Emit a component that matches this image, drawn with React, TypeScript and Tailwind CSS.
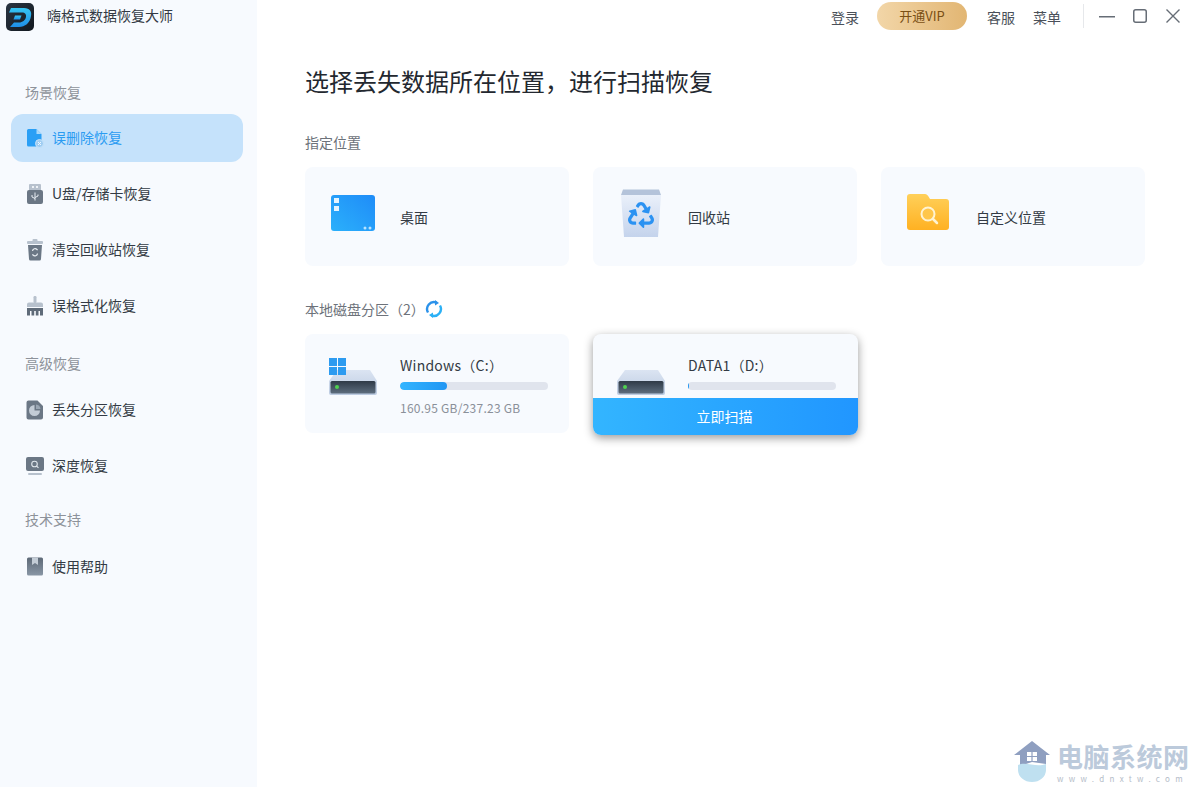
import React from 'react';
import { FaRecycle } from 'react-icons/fa';

const Logo = () => (
    <svg width="28" height="28" viewBox="0 0 28 28">
        <defs>
            <linearGradient id="logoBg" x1="0" y1="0" x2="1" y2="1">
                <stop offset="0" stopColor="#2a3542" />
                <stop offset="1" stopColor="#12181f" />
            </linearGradient>
            <linearGradient id="logoD" x1="0" y1="0" x2="0" y2="1">
                <stop offset="0" stopColor="#35c4f2" />
                <stop offset="1" stopColor="#1f8fe8" />
            </linearGradient>
        </defs>
        <rect width="28" height="28" rx="5" fill="url(#logoBg)" />
        <path
            d="M5 5H18C24 5 26 9 25 13C24 20 19 24 13 24H4L8 19.500H13C16.500 19.500 19.500 17 20 14C20.500 11.500 19 9.500 16 9.500H3z"
            fill="url(#logoD)"
        />
        <path d="M9 12.500H15.500L14 16.500H7.500z" fill="url(#logoD)" />
    </svg>
);

const FileIcon = () => (
    <svg width="18" height="20" viewBox="0 0 18 20">
        <path
            d="M2.500 1h8l5 5v11a1.500 1.500 0 0 1-1.500 1.500H2.500A1.500 1.500 0 0 1 1 17V2.500A1.500 1.500 0 0 1 2.500 1z"
            fill="#2a9ff5"
        />
        <path d="M10.500 1l5 5h-5z" fill="#a8d8fb" />
        <circle cx="13.500" cy="15.500" r="4" fill="#9fcdf2" stroke="#c5e2fa" />
        <path d="M12 14l3 3m0-3l-3 3" stroke="#eef7ff" strokeWidth="1" />
    </svg>
);

const UsbIcon = () => (
    <svg width="18" height="22" viewBox="0 0 18 22">
        <path d="M4 1h10a1 1 0 0 1 1 1v5H3V2a1 1 0 0 1 1-1z" fill="#b7c1cd" />
        <rect x="6" y="3" width="2" height="2" fill="#eef2f6" />
        <rect x="10" y="3" width="2" height="2" fill="#eef2f6" />
        <rect x="1" y="7" width="16" height="14" rx="2" fill="#6b7785" />
        <path
            d="M9 9.500v8M6 12v2l3 1.500M12 11.500v1.500l-3 1.500"
            stroke="#e8edf2"
            strokeWidth="1"
            fill="none"
        />
    </svg>
);

const TrashIcon = () => (
    <svg width="18" height="22" viewBox="0 0 18 22">
        <rect x="6.500" y="0" width="5" height="3" rx="1" fill="#b7c1cd" />
        <rect x="1" y="2" width="16" height="3" rx="1" fill="#b7c1cd" />
        <path d="M2 6h14l-1 14a1.500 1.500 0 0 1-1.500 1.500h-9A1.500 1.500 0 0 1 3 20z" fill="#6b7785" />
        <path
            d="M6.500 12a2.600 2.600 0 0 1 4.500-1.500l.6.600M11.500 14.500a2.600 2.600 0 0 1-4.500 1.500l-.6-.6"
            stroke="#e8edf2"
            strokeWidth="1.200"
            fill="none"
        />
    </svg>
);

const BrushIcon = () => (
    <svg width="18" height="20" viewBox="0 0 18 20">
        <rect x="7.500" y="0" width="3" height="7" rx="1.200" fill="#b7c1cd" />
        <path d="M3 6.500h12a2 2 0 0 1 2 2V11H1V8.500a2 2 0 0 1 2-2z" fill="#b7c1cd" />
        <path
            d="M1 12h16v7.500h-3V15h-1.500v4.500h-2.700V15H8.200v4.500H5.500V15H4v4.500H1z"
            fill="#5f6b79"
        />
    </svg>
);

const PieIcon = () => (
    <svg width="18" height="20" viewBox="0 0 18 20">
        <path
            d="M2.500 0.500h9l5.500 5.500v11.500a2 2 0 0 1-2 2h-12.500a2 2 0 0 1-2-2v-15a2 2 0 0 1 2-2z"
            fill="#6b7785"
        />
        <path d="M8.500 5a5.500 5.500 0 1 0 5.500 5.500h-5.500z" fill="#c3ccd6" />
        <path d="M10 4.500a5 5 0 0 1 4.500 4.500H10z" fill="#9aa6b3" />
    </svg>
);

const DeepIcon = () => (
    <svg width="18" height="19" viewBox="0 0 18 19">
        <rect x="0" y="0" width="18" height="14" rx="2" fill="#6b7785" />
        <circle cx="8.500" cy="7" r="2.800" fill="none" stroke="#e0e6ec" strokeWidth="1.100" />
        <path d="M10.500 9l2 1.800" stroke="#e0e6ec" strokeWidth="1.100" />
        <rect x="2" y="16" width="14" height="2" rx="1" fill="#b7c1cd" />
    </svg>
);

const BookIcon = () => (
    <svg width="18" height="20" viewBox="0 0 18 20">
        <defs>
            <linearGradient id="bookBg" x1="0" y1="0" x2="0" y2="1">
                <stop offset="0" stopColor="#5d6977" />
                <stop offset="1" stopColor="#8996a5" />
            </linearGradient>
        </defs>
        <rect x="1" y="0.500" width="16" height="18" rx="1.500" fill="url(#bookBg)" />
        <path d="M6 0.500h6v7.500l-3-2-3 2z" fill="#c3ccd6" />
    </svg>
);

const DesktopIcon = () => (
    <svg width="48" height="40" viewBox="0 0 48 40">
        <defs>
            <linearGradient id="desk" x1="0" y1="1" x2="1" y2="0">
                <stop offset="0" stopColor="#2bb0fb" />
                <stop offset="1" stopColor="#1f8cf8" />
            </linearGradient>
        </defs>
        <rect x="2" y="2" width="44" height="36" rx="3" fill="url(#desk)" />
        <rect x="5" y="5" width="5" height="5" fill="#e4f4ff" />
        <rect x="5" y="13" width="5" height="5" fill="#e4f4ff" />
        <circle cx="36" cy="35" r="1.500" fill="#b8e2ff" />
        <circle cx="41" cy="35" r="1.500" fill="#b8e2ff" />
    </svg>
);

const RecycleIcon = () => (
    <svg width="40" height="48" viewBox="0 0 40 48">
        <defs>
            <linearGradient id="bin" x1="0" y1="0" x2="0" y2="1">
                <stop offset="0" stopColor="#eaf0fa" />
                <stop offset="1" stopColor="#c4d3ec" />
            </linearGradient>
        </defs>
        <path d="M0 6h40l-3 42H3z" fill="url(#bin)" />
        <path d="M2 0.500h36l2 5.500H0z" fill="#b4c3da" />
        <FaRecycle x="7" y="13" size={26} color="#2b92f2" />
    </svg>
);

const FolderIcon = () => (
    <svg width="48" height="40" viewBox="0 0 48 40">
        <defs>
            <linearGradient id="folder" x1="0" y1="0" x2="0" y2="1">
                <stop offset="0" stopColor="#ffd05a" />
                <stop offset="1" stopColor="#ffb122" />
            </linearGradient>
        </defs>
        <path
            d="M5 1h15c1.500 0 2.500 1 3.500 2.500L25 6h16a3 3 0 0 1 3 3v25a3 3 0 0 1-3 3H5a3 3 0 0 1-3-3V4a3 3 0 0 1 3-3z"
            fill="url(#folder)"
        />
        <circle cx="23" cy="21" r="6.500" fill="#ffc64a" stroke="#fff3d2" strokeWidth="2" />
        <path d="M28 26l4 4" stroke="#fff3d2" strokeWidth="2.500" strokeLinecap="round" />
    </svg>
);

const DiskIcon = ({ win }: { win?: boolean }) => (
    <svg width="48" height="38" viewBox="0 0 48 38">
        <defs>
            <linearGradient id={win ? 'diskTopC' : 'diskTopD'} x1="0" y1="0" x2="0" y2="1">
                <stop offset="0" stopColor="#dbe4f2" />
                <stop offset="1" stopColor="#bccbe1" />
            </linearGradient>
            <linearGradient id={win ? 'diskFaceC' : 'diskFaceD'} x1="0" y1="0" x2="0" y2="1">
                <stop offset="0" stopColor="#2f3a47" />
                <stop offset="1" stopColor="#5d6d7e" />
            </linearGradient>
        </defs>
        <path
            d="M8 12h33l7 11v12a2 2 0 0 1-2 2H2a2 2 0 0 1-2-2V23z"
            fill={`url(#${win ? 'diskTopC' : 'diskTopD'})`}
        />
        <rect
            x="1.500"
            y="23"
            width="45"
            height="12.500"
            rx="1.500"
            fill={`url(#${win ? 'diskFaceC' : 'diskFaceD'})`}
        />
        <circle cx="8" cy="29" r="2" fill="#4fd14f" />
        {win && (
            <g fill="#2d9bf0">
                <rect x="0" y="0" width="8" height="8" />
                <rect x="9" y="0" width="8" height="8" />
                <rect x="0" y="9" width="8" height="8" />
                <rect x="9" y="9" width="8" height="8" />
            </g>
        )}
    </svg>
);

const RefreshIcon = () => (
    <svg width="18" height="18" viewBox="0 0 18 18" fill="none">
        <path d="M3 12.500A7 7 0 0 1 11.500 2.500" stroke="#2b92ea" strokeWidth="2.400" />
        <path d="M15 5.500A7 7 0 0 1 6.500 15.500" stroke="#2bb0f5" strokeWidth="2.400" />
        <path d="M10 0l4 3-4 2.500z" fill="#2b92ea" />
        <path d="M8 18l-4-3 4-2.500z" fill="#2bb0f5" />
    </svg>
);

const HouseIcon = () => (
    <svg width="36" height="41" viewBox="0 0 36 41">
        <path d="M18 0l18 14h-4v9l-14-2-12 4v-11H0z" fill="#8f9fc0" />
        <path d="M4 24c8-4 18 3 28-1v6a14 12 0 0 1-28 0z" fill="#bfe0f0" />
        <rect x="13" y="11" width="10" height="9" fill="#fff" />
        <path d="M18 11v9M13 15.500h10" stroke="#8f9fc0" strokeWidth="1.200" />
    </svg>
);

const NavItem = ({
    icon,
    label,
    active,
}: {
    icon: React.ReactNode;
    label: string;
    active?: boolean;
}) => (
    <div
        className={
            'flex h-12 items-center gap-2 rounded-xl pl-[15px] text-[14px] ' +
            (active ? 'bg-[#c5e2fb] text-[#2b9cf2]' : 'text-[#333a44]')
        }
    >
        <span className="flex w-[18px] shrink-0 justify-center">{icon}</span>
        <span className="mb-[2px]">{label}</span>
    </div>
);

const NavLabel = ({ children }: { children: string }) => (
    <div className="ml-[14px] h-5 text-[14px] leading-5 text-[#8d929a]">{children}</div>
);

const LocationCard = ({ icon, label }: { icon: React.ReactNode; label: string }) => (
    <div className="flex h-[99px] items-center gap-[23px] rounded-lg bg-[#f7fafe] pl-6">
        <div className="mb-[7px] flex h-12 w-12 items-center justify-center">{icon}</div>
        <span className="mt-[1px] text-[14px] text-[#333a44]">{label}</span>
    </div>
);

export default function App() {
    return (
        <div
            className="relative flex h-[787px] w-[1197px] overflow-hidden bg-white"
            style={{ fontFamily: '"Noto Sans CJK SC", "Noto Sans", sans-serif' }}
        >
            <aside className="w-[257px] shrink-0 bg-[#f7fafe]">
                <div className="flex h-[82px] items-start gap-[13px] pl-[6px] pt-[3px]">
                    <Logo />
                    <span className="mt-[2px] text-[14px] leading-5 text-[#333a44]">
                        嗨格式数据恢复大师
                    </span>
                </div>
                <div className="ml-[11px] w-[232px]">
                    <NavLabel>场景恢复</NavLabel>
                    <div className="mt-3 flex flex-col gap-2">
                        <NavItem icon={<FileIcon />} label="误删除恢复" active />
                        <NavItem icon={<UsbIcon />} label="U盘/存储卡恢复" />
                        <NavItem icon={<TrashIcon />} label="清空回收站恢复" />
                        <NavItem icon={<BrushIcon />} label="误格式化恢复" />
                    </div>
                    <div className="mt-[23px]">
                        <NavLabel>高级恢复</NavLabel>
                    </div>
                    <div className="mt-[13px] flex flex-col gap-2">
                        <NavItem icon={<PieIcon />} label="丢失分区恢复" />
                        <NavItem icon={<DeepIcon />} label="深度恢复" />
                    </div>
                    <div className="mt-[19px]">
                        <NavLabel>技术支持</NavLabel>
                    </div>
                    <div className="mt-[14px]">
                        <NavItem icon={<BookIcon />} label="使用帮助" />
                    </div>
                </div>
            </aside>

            <main className="flex-1 pl-[48px]">
                <header className="flex h-[32px] items-start justify-end pt-[2px] text-[14px] text-[#4a5059]">
                    <span className="mt-[5px] leading-5">登录</span>
                    <span className="ml-[18px] flex h-7 w-[90px] items-center justify-center rounded-full bg-gradient-to-r from-[#f2d6a8] to-[#e2b673] text-[13px] text-[#7a4f14]">
                        开通VIP
                    </span>
                    <span className="ml-5 mt-[5px] leading-5">客服</span>
                    <span className="ml-[18px] mt-[5px] leading-5">菜单</span>
                    <span className="ml-[22px] mt-[2px] h-6 w-px bg-[#e6e8eb]" />
                    <span className="ml-[15px] mt-[7px] flex h-4 w-4 items-center">
                        <svg width="16" height="2" viewBox="0 0 16 2">
                            <rect width="16" height="1.500" fill="#666d76" />
                        </svg>
                    </span>
                    <span className="ml-[18px] mt-[7px]">
                        <svg width="14" height="14" viewBox="0 0 14 14" fill="none">
                            <rect x="0.750" y="0.750" width="12.500" height="12.500" rx="2" stroke="#666d76" strokeWidth="1.500" />
                        </svg>
                    </span>
                    <span className="ml-[19px] mr-[17px] mt-[7px]">
                        <svg width="14" height="14" viewBox="0 0 14 14" fill="none">
                            <path d="M0.500 0.500l13 13M13.500 0.500l-13 13" stroke="#666d76" strokeWidth="1.400" />
                        </svg>
                    </span>
                </header>

                <h1 className="mt-[31px] text-[24px] font-normal leading-[36px] text-[#23282f]">
                    选择丢失数据所在位置，进行扫描恢复
                </h1>

                <div className="mt-[33px] text-[14px] leading-5 text-[#6d727a]">指定位置</div>
                <div className="mt-[15px] grid w-[840px] grid-cols-3 gap-6">
                    <LocationCard icon={<DesktopIcon />} label="桌面" />
                    <LocationCard icon={<RecycleIcon />} label="回收站" />
                    <LocationCard icon={<FolderIcon />} label="自定义位置" />
                </div>

                <div className="mt-[33px] flex h-5 items-center text-[14px] leading-5 text-[#6d727a]">
                    <span>本地磁盘分区（2）</span>
                    <RefreshIcon />
                </div>
                <div className="mt-[15px] grid w-[840px] grid-cols-3 gap-6">
                    <div className="flex h-[99px] items-start gap-[23px] rounded-lg bg-[#f7fafe] pl-6">
                        <div className="mt-[24px] h-[38px] w-12">
                            <DiskIcon win />
                        </div>
                        <div className="w-[148px] pt-[21px]">
                            <div className="text-[14px] leading-5 tracking-[0.25px] text-[#333a44]">Windows（C:）</div>
                            <div className="mt-[7px] h-2 overflow-hidden rounded-full bg-[#e0e4ed]">
                                <div
                                    className="h-full rounded-full bg-gradient-to-r from-[#33b5ff] to-[#2196f3]"
                                    style={{ width: '32%' }}
                                />
                            </div>
                            <div className="mt-[10px] text-[12px] leading-4 tracking-[0.25px] text-[#8a9099]">
                                160.95 GB/237.23 GB
                            </div>
                        </div>
                    </div>

                    <div className="relative h-[99px]">
                        {/* hovered card is a little larger than its grid cell */}
                        <div className="absolute left-0 top-0 h-[101px] w-[265px] overflow-hidden rounded-lg bg-[#f7fafe] shadow-[0_3px_10px_rgba(0,0,0,0.4)]">
                            <div className="flex h-[64px] items-start gap-[23px] pl-6">
                                <div className="mt-[24px] h-[38px] w-12">
                                    <DiskIcon />
                                </div>
                                <div className="w-[148px] pt-[21px]">
                                    <div className="text-[14px] leading-5 tracking-[0.25px] text-[#333a44]">DATA1（D:）</div>
                                    <div className="mt-[7px] h-2 overflow-hidden rounded-full bg-[#e0e4ed]">
                                        <div className="h-full w-px bg-[#2196f3]" />
                                    </div>
                                </div>
                            </div>
                            <button className="flex h-[37px] w-full items-center justify-center bg-gradient-to-r from-[#33b5ff] to-[#2196ff] pr-[2px] text-[14px] text-white">
                                立即扫描
                            </button>
                        </div>
                    </div>
                </div>
            </main>

            {/* site watermark stamped over the corner */}
            <div className="absolute bottom-[3px] left-[1014px] flex items-start gap-[7px]">
                <HouseIcon />
                <div className="flex flex-col">
                    <span className="text-[26px] font-bold leading-[30px] tracking-[0.5px] text-[#bccadb]">电脑系统网</span>
                    <span className="mt-[3px] text-[8px] leading-[10px] tracking-[5.300px] text-[#b4bcc8]">
                        www.dnxtw.com
                    </span>
                </div>
            </div>
        </div>
    );
}
